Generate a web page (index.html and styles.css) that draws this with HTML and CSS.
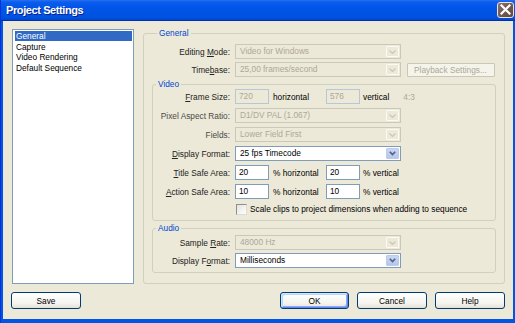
FILE: index.html
```html
<!DOCTYPE html>
<html>
<head>
<meta charset="utf-8">
<title>Project Settings</title>
<link rel="stylesheet" href="styles.css">
</head>
<body>
<div class="window">
  <div class="titlebar">
    <span class="title">Project Settings</span>
    <span class="close"><svg width="11" height="11" viewBox="0 0 11 11"><path d="M1.5 1.5 L9.5 9.5 M9.5 1.5 L1.5 9.5" stroke="#fff" stroke-width="2.2" stroke-linecap="square"/></svg></span>
  </div>
  <div class="client">
    <ul class="list">
      <li class="sel">General</li>
      <li>Capture</li>
      <li>Video Rendering</li>
      <li>Default Sequence</li>
    </ul>
    <fieldset class="group outer">
      <legend>General</legend>
      <div class="row">
        <label class="lbl">Editing <u>M</u>ode:</label>
        <div class="combo off"><span class="val">Video for Windows</span><span class="drop"><svg width="7" height="4" viewBox="0 0 7 4"><path d="M0.5 0.5 L3.5 3.5 L6.5 0.5" fill="none" stroke="#c9c7ba" stroke-width="1.2"/></svg></span></div>
      </div>
      <div class="row">
        <label class="lbl">Time<u>b</u>ase:</label>
        <div class="combo off"><span class="val">25,00 frames/second</span><span class="drop"><svg width="7" height="4" viewBox="0 0 7 4"><path d="M0.5 0.5 L3.5 3.5 L6.5 0.5" fill="none" stroke="#c9c7ba" stroke-width="1.2"/></svg></span></div>
        <button class="btn pb" disabled>Playback Settings...</button>
      </div>
      <fieldset class="group inner video">
        <legend>Video</legend>
        <div class="row">
          <label class="lbl"><u>F</u>rame Size:</label>
          <div class="edit off">720</div>
          <span class="unit">horizontal</span>
          <div class="edit off">576</div>
          <span class="unit2">vertical</span>
          <span class="ratio">4:3</span>
        </div>
        <div class="row">
          <label class="lbl dim">Pixel Aspect Ratio:</label>
          <div class="combo off"><span class="val">D1/DV PAL (1.067)</span><span class="drop"><svg width="7" height="4" viewBox="0 0 7 4"><path d="M0.5 0.5 L3.5 3.5 L6.5 0.5" fill="none" stroke="#c9c7ba" stroke-width="1.2"/></svg></span></div>
        </div>
        <div class="row">
          <label class="lbl dim">Fields:</label>
          <div class="combo off"><span class="val">Lower Field First</span><span class="drop"><svg width="7" height="4" viewBox="0 0 7 4"><path d="M0.5 0.5 L3.5 3.5 L6.5 0.5" fill="none" stroke="#c9c7ba" stroke-width="1.2"/></svg></span></div>
        </div>
        <div class="row">
          <label class="lbl"><u>D</u>isplay Format:</label>
          <div class="combo on"><span class="val">25 fps Timecode</span><span class="drop"><svg width="7" height="5" viewBox="0 0 7 5"><path d="M0.8 0.8 L3.5 3.6 L6.2 0.8" fill="none" stroke="#4d6185" stroke-width="1.6"/></svg></span></div>
        </div>
        <div class="row">
          <label class="lbl"><u>T</u>itle Safe Area:</label>
          <div class="edit">20</div>
          <span class="unit">% horizontal</span>
          <div class="edit">20</div>
          <span class="unit2">% vertical</span>
        </div>
        <div class="row">
          <label class="lbl"><u>A</u>ction Safe Area:</label>
          <div class="edit">10</div>
          <span class="unit">% horizontal</span>
          <div class="edit">10</div>
          <span class="unit2">% vertical</span>
        </div>
        <div class="row check">
          <span class="box"></span>
          <span class="chk-label">Scale clips to project dimensions when adding to sequence</span>
        </div>
      </fieldset>
      <fieldset class="group inner audio">
        <legend>Audio</legend>
        <div class="row first">
          <label class="lbl">Sample <u>R</u>ate:</label>
          <div class="combo off"><span class="val">48000 Hz</span><span class="drop"><svg width="7" height="4" viewBox="0 0 7 4"><path d="M0.5 0.5 L3.5 3.5 L6.5 0.5" fill="none" stroke="#c9c7ba" stroke-width="1.2"/></svg></span></div>
        </div>
        <div class="row second">
          <label class="lbl">Display F<u>o</u>rmat:</label>
          <div class="combo on"><span class="val">Milliseconds</span><span class="drop"><svg width="7" height="5" viewBox="0 0 7 5"><path d="M0.8 0.8 L3.5 3.6 L6.2 0.8" fill="none" stroke="#4d6185" stroke-width="1.6"/></svg></span></div>
        </div>
      </fieldset>
    </fieldset>
    <div class="buttons">
      <button class="btn">Save</button>
      <span class="spacer"></span>
      <button class="btn default">OK</button>
      <button class="btn">Cancel</button>
      <button class="btn">Help</button>
    </div>
  </div>
</div>
</body>
</html>
```

FILE: styles.css
```css
* { box-sizing: border-box; }
html, body { margin: 0; padding: 0; background: #0054e3; }
body {
  font-family: "Liberation Sans", Arial, sans-serif;
  font-size: 8.3px;
  color: #000;
  width: 515px;
  height: 323px;
  overflow: hidden;
}
.window {
  width: 515px;
  height: 323px;
  display: flex;
  flex-direction: column;
  background: #0055e5;
  border-left: 1px solid #0831d9;
}
.titlebar {
  height: 21px;
  flex: none;
  display: flex;
  align-items: center;
  justify-content: space-between;
  padding: 0 1px 1px 5px;
  background: linear-gradient(#2a70f0 0, #0a5ded 2px, #0055e8 40%, #0053e1 85%, #0046cf 100%);
  border-bottom: 1px solid #0030b0;
}
.title {
  color: #fff;
  font-weight: bold;
  font-size: 11px;
  letter-spacing: -0.4px;
  text-shadow: 1px 1px 0 #0a1f8a;
}
.close {
  width: 17px;
  height: 16px;
  display: flex;
  align-items: center;
  justify-content: center;
  border: 1px solid #e8e4e0;
  border-radius: 3px;
  background: linear-gradient(135deg, #8c7068, #6d5650 60%, #5e4944);
}
.client {
  flex: 1;
  margin: 0 2px 4px 2px;
  background: #ece9d8;
  display: grid;
  grid-template-columns: 122px 362px;
  grid-template-rows: 256px auto;
  column-gap: 9px;
  padding: 7px 7px 0 9px;
}
.list {
  list-style: none;
  margin: 1px 0 0 0;
  padding: 1px 1px 0 2px;
  height: 255px;
  background: #fff;
  border: 1px solid #7f9db9;
}
.list li {
  height: 10.5px;
  line-height: 10.5px;
  padding-left: 1px;
  white-space: nowrap;
}
.list li.sel {
  background: #316ac5;
  color: #fff;
  height: 10px;
  line-height: 10px;
  margin-bottom: 0.5px;
}
fieldset.group {
  margin: 0;
  min-width: 0;
  border: 1px solid #d0d0bf;
  border-radius: 3px;
}
fieldset.group legend {
  color: #0046d5;
  line-height: 10px;
  padding: 0 2px;
}
.outer {
  padding: 6px 8px 0 8px;
}
.outer > legend { margin-left: 5px; }
.inner {
  padding: 0 0 5px 0;
  margin-top: 2px !important;
}
.inner > legend { margin-left: 3px; }
.audio { padding: 2px 0 4px 0; }
.row {
  display: flex;
  align-items: center;
  height: 15px;
  margin-top: 4px;
}
.outer > .row + .row { margin-top: 3px; }
.outer > .row:first-of-type { margin-top: 0; }
.video > .row:first-of-type { margin-top: 0; }
.audio .row.first { margin-top: 0; }
.audio .row.second { margin-top: 3px; }
.lbl {
  width: 78px;
  margin-right: 5px;
  text-align: right;
  white-space: nowrap;
  color: #222;
}
.inner .lbl { width: 77px; }
.lbl.dim { color: #4a4a4a; }
.combo {
  width: 166px;
  height: 15px;
  display: flex;
  align-items: stretch;
  border: 1px solid #7f9db9;
  background: #fff;
}
.combo .val {
  flex: 1;
  padding-left: 4px;
  line-height: 13px;
  white-space: nowrap;
  overflow: hidden;
}
.combo .drop {
  width: 13px;
  display: flex;
  align-items: center;
  justify-content: center;
  margin: 1px 1px 1px 0;
  border-radius: 1px;
}
.combo.on .drop {
  background: linear-gradient(#c9d6f4, #b6c7ea);
  border: 1px solid #bccbe8;
}
.combo.off {
  border-color: #cac8bb;
  background: #ece9d8;
}
.combo.off .val { color: #aca899; }
.combo.off .drop {
  border: 1px solid #fbfbf6;
  background: #ece9d8;
}
.edit {
  width: 34px;
  height: 15px;
  border: 1px solid #7f9db9;
  background: #fff;
  padding-left: 3px;
  line-height: 13px;
}
.edit.off {
  background: #ece9d8;
  color: #aca899;
  border-color: #b7c6d8;
}
.unit {
  width: 57px;
  padding-left: 4px;
  white-space: nowrap;
}
.unit2 {
  padding-left: 3px;
  white-space: nowrap;
}
.ratio {
  margin-left: 14px;
  color: #aca899;
}
.row.check {
  height: 12px;
  margin-top: 4px;
  padding-left: 83px;
}
.box {
  width: 11px;
  height: 11px;
  border: 1px solid #8e8f8f;
  border-right-color: #dcdcd6;
  border-bottom-color: #dcdcd6;
  background: linear-gradient(135deg, #e4e4dc, #fff);
  margin-right: 3px;
}
.btn {
  font-family: inherit;
  font-size: 8.3px;
  color: #000;
  height: 17px;
  width: 70px;
  padding: 0;
  border: 1px solid #003c74;
  border-radius: 3px;
  background: linear-gradient(#ffffff, #f4f3ee 70%, #e3e0d6);
}
.btn.pb {
  width: 88px;
  height: 14px;
  margin-left: 6px;
  border-color: #c9c7ba;
  border-radius: 1px;
  background: #f5f4ea;
  color: #aca899;
  text-align: left;
  padding-left: 6px;
}
.btn.default {
  width: 69px;
  box-shadow: inset 1px 1px 0 #cee7ff, inset -1px -1px 0 #6982ee, inset 2px 2px 0 #bcd4f6, inset -2px -2px 0 #89adf4;
}
.buttons {
  grid-column: 1 / 3;
  display: flex;
  align-items: flex-start;
  margin-top: 8px;
  margin-left: -1px;
  gap: 8px;
}
.buttons .spacer { flex: 1; }
```
